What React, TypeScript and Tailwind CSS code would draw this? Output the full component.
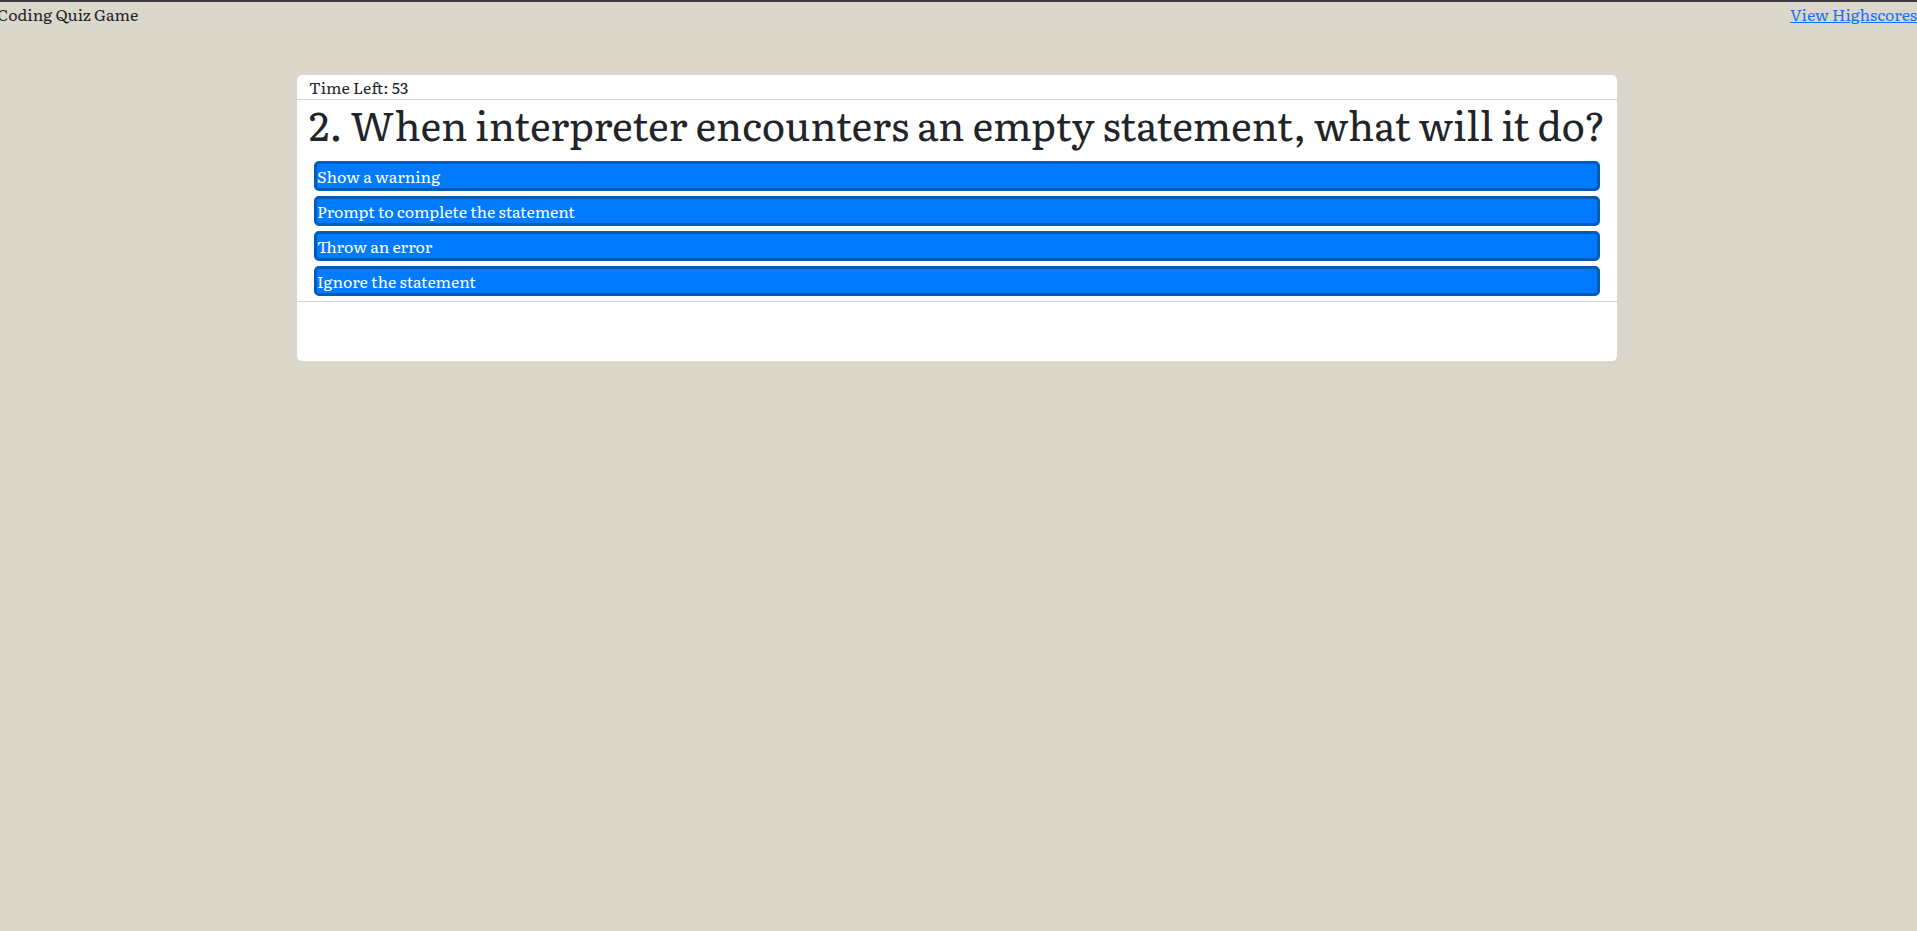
const answers = [
  'Show a warning',
  'Prompt to complete the statement',
  'Throw an error',
  'Ignore the statement',
];

export default function App() {
  return (
    <div className="min-h-screen overflow-x-hidden border-t-2 border-[#403c42] bg-[#dbd7cb] font-['Literata','Liberation_Serif',serif] text-base leading-6 text-[#212529] [font-optical-sizing:none]">
      <div className="-ml-[3px]">
        <header className="flex justify-between border-b border-[#d3d3d3]">
          <span>Coding Quiz Game</span>
          <a href="#highscores" className="text-[#1a6dff] underline">
            View Highscores
          </a>
        </header>
        <main className="mx-auto mt-12 max-w-[1320px] rounded-[5px] bg-white">
          <div className="border-b border-[#d3d3d3] px-3">Time Left: 53</div>
          <section className="border-b border-[#d3d3d3] pb-[5px]">
            <h1 className="mb-[13px] pl-3 pr-1 text-[40px] leading-[48px]">
              2. When interpreter encounters an empty statement, what will it do?
            </h1>
            <div className="flex flex-col gap-[5px] px-[17px]">
              {answers.map((answer) => (
                <button
                  key={answer}
                  type="button"
                  className="rounded-[5px] border-3 border-[#005cba] bg-[#007bff] text-left text-white"
                >
                  {answer}
                </button>
              ))}
            </div>
          </section>
          <div className="h-[59px]" />
        </main>
      </div>
    </div>
  );
}
